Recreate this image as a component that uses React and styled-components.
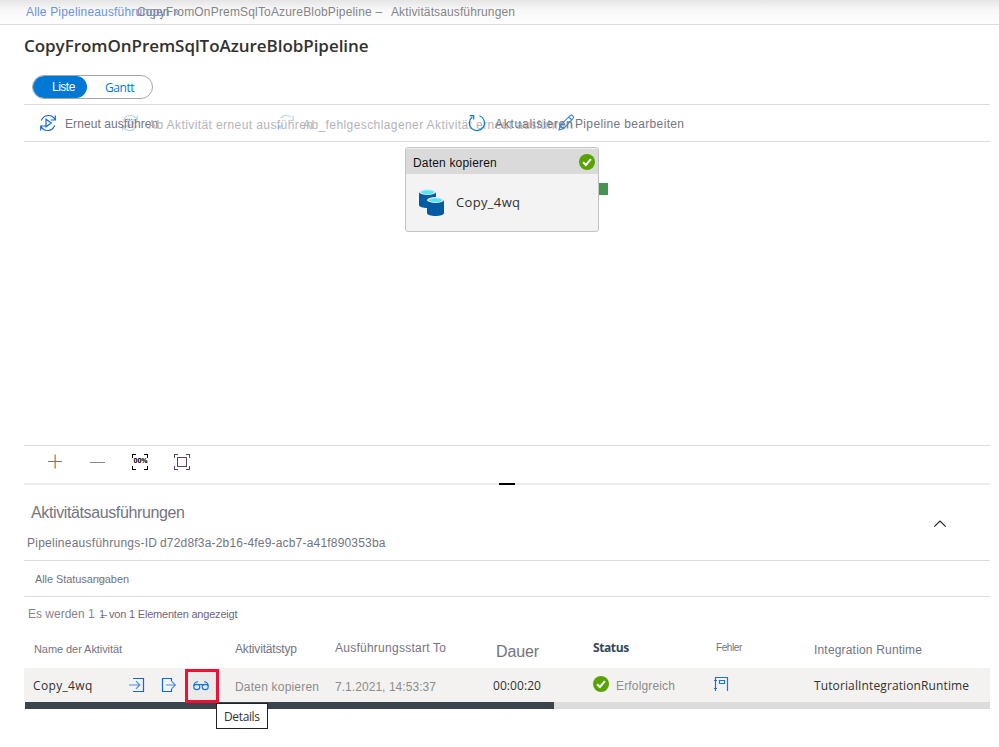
import React from 'react';
import styled, { createGlobalStyle, css } from 'styled-components';

const GlobalStyle = createGlobalStyle`
  * { box-sizing: border-box; }
  body { margin: 0; background: #fff; overflow: hidden; }
`;

const sans = '"Liberation Sans", Arial, sans-serif';
const ui = '"Open Sans", "Noto Sans", sans-serif';

const Page = styled.div`
  display: flex;
  flex-direction: column;
  width: 999px;
  height: 747px;
  background: #fff;
  font-family: ${sans};
`;

const Label = styled.span`
  display: block;
  height: 16px;
  line-height: 16px;
  margin-top: ${(p) => p.$drop || 0}px;
  white-space: pre;
  font-family: ${(p) => (p.$ui ? ui : sans)};
  font-size: ${(p) => p.$size || 12}px;
  font-weight: ${(p) => p.$weight || 400};
  letter-spacing: ${(p) => p.$track || 0}px;
  color: ${(p) => p.$color || '#74747f'};
`;

const Breadcrumbs = styled.nav`
  display: grid;
  grid-template-columns: 111px 254px 1fr;
  height: 25px;
  padding: 4px 0 0 26px;
  border-bottom: 1px solid #dcdcdc;
  background: linear-gradient(#e5e5e5, #f8f8f8 10px, #fdfdfd);
`;

const Title = styled.h1`
  margin: 0 0 0 24px;
  height: 50px;
  padding-top: 9px;
  font: 600 17px/24px ${ui};
  letter-spacing: -0.05px;
  color: #323130;
`;

const ViewSwitch = styled.div`
  display: grid;
  grid-template-columns: 54px 1fr;
  width: 121px;
  height: 24px;
  margin-left: 32px;
  border: 1px solid #a6a6a6;
  border-radius: 12px;
  overflow: hidden;
`;

const ViewOption = styled.div`
  padding: ${(p) => (p.$active ? '3px 0 0 19px' : '4px 0 0 18px')};
  border-radius: 12px;
  background: ${(p) => (p.$active ? '#0078d4' : 'transparent')};
`;

const Toolbar = styled.div`
  display: grid;
  grid-template-columns: 82px 156px 191px 90px 1fr;
  height: 38px;
  margin: 5px 9px 0 24px;
  padding: 9px 0 0 15px;
  border-top: 1px solid #dcdcdc;
  border-bottom: 1px solid #dcdcdc;
`;

const Command = styled.div`
  display: grid;
  grid-template-columns: ${(p) => p.$icon}px 1fr;
  height: 20px;
  min-width: 0;

  svg { opacity: ${(p) => (p.$disabled ? 0.3 : 1)}; }
`;

const Canvas = styled.div`
  display: flex;
  height: 303px;
  padding: 5px 0 0 405px;
`;

const Activity = styled.div`
  width: 194px;
  height: 85px;
  border: 1px solid #c3c3c3;
  border-radius: 3px;
  background: #f3f3f3;
  overflow: hidden;
`;

const ActivityHeader = styled.div`
  display: flex;
  justify-content: space-between;
  height: 26px;
  padding: 5px 3px 0 7px;
  border-top: 1px solid #f0f0f0;
  background: #dadada;
`;

const ActivityBody = styled.div`
  display: grid;
  grid-template-columns: 38px 1fr;
  padding: 15px 0 0 12px;
`;

const Port = styled.div`
  width: 9px;
  height: 12px;
  margin-top: 36px;
  background: #479352;
`;

const ZoomBar = styled.div`
  display: grid;
  grid-template-columns: 42px 42px 42px 42px;
  height: 38px;
  margin: 0 9px 0 24px;
  padding: 6px 0 0 21px;
  border-top: 1px solid #dcdcdc;
`;

const Splitter = styled.div`
  display: flex;
  justify-content: center;
  height: 2px;
  margin: 0 9px 0 24px;
  background: #ececec;

  &::after { content: ''; width: 16px; background: #000; }
`;

const Section = styled.header`
  display: flex;
  justify-content: space-between;
  height: 76px;
  margin: 0 9px 0 24px;
  padding: 20px 43px 0 3px;
  border-bottom: 1px solid #dcdcdc;
`;

const SectionText = styled.div`
  display: flex;
  flex-direction: column;
  gap: 14px;
`;

const Indent = styled.div`
  padding-left: ${(p) => p.$by}px;
`;

const RunId = styled.div`
  display: grid;
  grid-template-columns: 133px 1fr;
`;

const Chevron = styled.svg`
  width: 14px;
  height: 8px;
  margin-top: 15px;
`;

const FilterBar = styled.div`
  display: grid;
  grid-template-columns: 63px 1fr;
  height: 36px;
  margin: 0 9px 0 24px;
  padding: 10px 0 0 11px;
  border-bottom: 1px solid #dcdcdc;
`;

const Count = styled.div`
  display: grid;
  grid-template-columns: 71px 10px 1fr;
  height: 43px;
  padding: 9px 0 0 28px;
`;

const columns = css`
  display: grid;
  grid-template-columns: 201px 100px 160px 98px 123px 98px 1fr;
  margin: 0 9px 0 24px;
  padding-left: 10px;
`;

const HeadRow = styled.div`
  ${columns}
  height: 28px;
`;

const DataRow = styled.div`
  ${columns}
  height: 34px;
  background: #f3f2f1;
`;

const NameCell = styled.div`
  display: grid;
  grid-template-columns: 96px 32px 24px 34px;
  margin-left: -1px;
`;

const IconSlot = styled.div`
  padding-top: ${(p) => p.$top || 9}px;
  height: 26px;
`;

const DetailsButton = styled.div`
  position: relative;
  width: 34px;
  height: 34px;
  margin-top: 1px;
  padding: 9px 0 0 5px;
  border: 3px solid #ee1133;
  background: #eaeaea;
`;

const Tooltip = styled.div`
  position: absolute;
  z-index: 1;
  left: 28px;
  top: 31px;
  width: 52px;
  height: 26px;
  padding: 5px 0 0 7px;
  border: 1px solid #222;
  background: #fff;
`;

const Shift = styled.div`
  margin-left: ${(p) => p.$x}px;
`;

const StatusCell = styled.div`
  display: grid;
  grid-template-columns: 23px 1fr;
`;

const ScrollTrack = styled.div`
  height: 7px;
  margin: 0 9px 0 25px;
  background: #dcdcdc;
`;

const ScrollThumb = styled.div`
  width: 529px;
  height: 7px;
  background: #3b444d;
`;

const Glyph = styled.svg`
  display: block;
  overflow: visible;
  fill: none;
  stroke: ${(p) => p.$stroke || '#1267d8'};
  stroke-width: ${(p) => p.$weight || 1.2};
`;

function RerunIcon() {
  return (
    <Glyph width="18" height="18" viewBox="0 0 18 18">
      <path d="M2.3 6.6C5 .2 12.8-.2 16 5.5M16.3 1.5V6h-4.6M15.7 11.4C13 17.8 5.2 18.2 2 12.5M1.7 16.5V12h4.6M7 5.2v7.6L12.3 9z" />
    </Glyph>
  );
}

function RefreshIcon() {
  return (
    <Glyph width="18" height="18" viewBox="0 0 18 18" $stroke="#0078d4">
      <path d="M11.5 1.8A7.6 7.6 0 1 1 4.3 2.9M1.7 1.6h4v4" />
    </Glyph>
  );
}

function RerunFailedIcon() {
  return (
    <Glyph width="18" height="18" viewBox="0 0 18 18">
      <path d="M3.5 4C6.5.9 11 .8 14 3M16.2 2v4.5h-3M1.5 16v-4h4M2.2 12.2l1.6 2.4" />
    </Glyph>
  );
}

function EditIcon() {
  return (
    <Glyph width="17" height="17" viewBox="0 0 17 17" $stroke="#3b87dc" $weight="1.1">
      <path d="M1 16l1.2-4.6L12.2 1.6q1.3-1 2.6.3t.3 2.6L5.5 14.7zM10.8 3l3 3M2.2 11.4l3.3 3.3" />
    </Glyph>
  );
}

function SuccessIcon() {
  return (
    <Glyph width="16" height="16" viewBox="0 0 16 16" $stroke="none">
      <circle cx="8" cy="8" r="8" fill="#57a300" />
      <path d="M4.1 8.2l2.8 2.8 5-5.8" stroke="#fff" strokeWidth="2" />
    </Glyph>
  );
}

function Cylinder({ x, y }) {
  return (
    <g transform={`translate(${x} ${y})`}>
      <path d="M0 3v13c0 4 17 4 17 0V3z" fill="#005ba1" />
      <ellipse cx="8.5" cy="3" rx="8.5" ry="3" fill="#e8e8e8" />
      <ellipse cx="8.5" cy="3.2" rx="6.5" ry="2" fill="#50e6ff" />
    </g>
  );
}

function CopyDataIcon() {
  return (
    <Glyph width="28" height="28" viewBox="0 0 28 28" $stroke="none">
      <Cylinder x={1} y={0} />
      <Cylinder x={9} y={8} />
    </Glyph>
  );
}

function PlusIcon() {
  return (
    <Glyph width="20" height="20" viewBox="0 0 20 20" $stroke="#777" $weight="1">
      <path d="M9.5 2.5v14" stroke="#e9b98a" />
      <path d="M10.5 2.5v14" stroke="#60adf0" />
      <path d="M3 9.5h14" />
    </Glyph>
  );
}

function MinusIcon() {
  return (
    <Glyph width="20" height="20" viewBox="0 0 20 20" $stroke="#8a8a8a" $weight="1">
      <path d="M3 10.5h15" />
    </Glyph>
  );
}

const ZoomFrame = styled.div`
  display: grid;
  place-items: center;
  width: 16px;
  height: 16px;
  margin: 2px 0 0 3px;
  --edge: ${(p) => p.$color};
  background:
    linear-gradient(var(--edge), var(--edge)) 0 0 / 4px 1px,
    linear-gradient(var(--edge), var(--edge)) 0 0 / 1px 4px,
    linear-gradient(var(--edge), var(--edge)) 100% 0 / 4px 1px,
    linear-gradient(var(--edge), var(--edge)) 100% 0 / 1px 4px,
    linear-gradient(var(--edge), var(--edge)) 0 100% / 4px 1px,
    linear-gradient(var(--edge), var(--edge)) 0 100% / 1px 4px,
    linear-gradient(var(--edge), var(--edge)) 100% 100% / 4px 1px,
    linear-gradient(var(--edge), var(--edge)) 100% 100% / 1px 4px;
  background-repeat: no-repeat;
`;

const Percent = styled.span`
  font: 700 7px/14px ${ui};
  height: 16px;
  padding-left: 1px;
  letter-spacing: -0.1px;
  color: #000;
`;

const FitBox = styled.div`
  width: 10px;
  height: 10px;
  border: 1px solid #5a4660;
`;

function InputIcon() {
  return (
    <Glyph width="16" height="16" viewBox="0 0 16 16">
      <path d="M4 1.5h10.5v13H4" />
      <path d="M0 8h10.5M7 4.2L10.8 8 7 11.8" stroke="#4b8ee6" />
    </Glyph>
  );
}

function OutputIcon() {
  return (
    <Glyph width="16" height="16" viewBox="0 0 16 16">
      <path d="M10.5 4V1.5h-9v13h9V12" />
      <path d="M5 8h9M10.5 4.2L14.3 8l-3.8 3.8" stroke="#4b8ee6" />
    </Glyph>
  );
}

function GlassesIcon() {
  return (
    <Glyph width="16" height="10" viewBox="0 0 16 10" $stroke="#1976d2" $weight="1.1">
      <path d="M.6 5Q1.2.8 5 .8M15.4 5Q14.8.8 11 .8M.6 3.6h14.8" />
      <ellipse cx="3.8" cy="5.9" rx="3" ry="2.7" />
      <ellipse cx="12.2" cy="5.9" rx="3" ry="2.7" />
    </Glyph>
  );
}

function ErrorMessageIcon() {
  return (
    <Glyph width="16" height="16" viewBox="0 0 16 16" $stroke="#1976d2">
      <path d="M2.5 15V1.5h12V15M1 4.5h3M1 12.5h3M6.5 4.5h5v3h-5z" />
    </Glyph>
  );
}

export default function App() {
  return (
    <>
      <GlobalStyle />
      <Page>
        <Breadcrumbs>
          <Label $track={0.17} $color="#6b93dc">Alle Pipelineausführungen »</Label>
          <Label $track={0.17} $color="#858585">CopyFromOnPremSqlToAzureBlobPipeline –</Label>
          <Label $track={0.12} $color="#858585">Aktivitätsausführungen</Label>
        </Breadcrumbs>

        <Title>CopyFromOnPremSqlToAzureBlobPipeline</Title>

        <ViewSwitch>
          <ViewOption $active><Label $track={-0.5} $color="#fff">Liste</Label></ViewOption>
          <ViewOption><Label $ui $track={-0.45} $color="#0078d4">Gantt</Label></ViewOption>
        </ViewSwitch>

        <Toolbar>
          <Command $icon={26}><RerunIcon /><Label $drop={2} $track={0.08}>Erneut ausführen</Label></Command>
          <Command $icon={27} $disabled><RerunIcon /><Label $drop={3} $track={0.41} $color="#b4b4ba">Ab Aktivität erneut ausführen</Label></Command>
          <Command $icon={26} $disabled><RerunFailedIcon /><Label $drop={3} $track={0.41} $color="#b4b4ba">Ab_fehlgeschlagener Aktivität erneut ausführen</Label></Command>
          <Command $icon={27}><RefreshIcon /><Label $drop={2} $track={0.75}>Aktualisieren</Label></Command>
          <Command $icon={17}><EditIcon /><Label $drop={2} $track={0.35}>Pipeline bearbeiten</Label></Command>
        </Toolbar>

        <Canvas>
          <Activity>
            <ActivityHeader>
              <Label $drop={1} $track={0.18} $color="#111">Daten kopieren</Label>
              <SuccessIcon />
            </ActivityHeader>
            <ActivityBody>
              <CopyDataIcon />
              <Label $ui $size={13} $drop={5} $track={0.34} $color="#323130">Copy_4wq</Label>
            </ActivityBody>
          </Activity>
          <Port />
        </Canvas>

        <ZoomBar>
          <PlusIcon />
          <MinusIcon />
          <ZoomFrame $color="#000"><Percent>00%</Percent></ZoomFrame>
          <ZoomFrame $color="#5a4660"><FitBox /></ZoomFrame>
        </ZoomBar>
        <Splitter />

        <Section>
          <SectionText>
            <Indent $by={4}><Label $size={16} $track={-0.38}>Aktivitätsausführungen</Label></Indent>
            <RunId>
              <Label $track={0.25}>Pipelineausführungs-ID</Label>
              <Label $track={0.19}>d72d8f3a-2b16-4fe9-acb7-a41f890353ba</Label>
            </RunId>
          </SectionText>
          <Chevron viewBox="0 0 14 8"><path d="M1.3 6.7L7 1l5.7 5.7" fill="none" stroke="#222" strokeWidth="1.2" /></Chevron>
        </Section>

        <FilterBar>
          <Label $size={11} $track={-0.08}>Alle Statusangaben</Label>
          <Glyph width="10" height="6" viewBox="0 0 10 6" $stroke="#c6a468" $weight="1">
            <path d="M0 6l4.5 4L9 6" />
          </Glyph>
        </FilterBar>

        <Count>
          <Label $color="#85858e">Es werden 1</Label>
          <Label $size={11} $track={-4}>1–</Label>
          <Label $size={11} $track={-0.2} $color="#706580">von 1 Elementen angezeigt</Label>
        </Count>

        <HeadRow>
          <Label $size={11} $drop={1} $track={-0.07}>Name der Aktivität</Label>
          <Label $drop={1} $track={-0.17}>Aktivitätstyp</Label>
          <Label $track={0.25}>Ausführungsstart To</Label>
          <Shift $x={1}><Label $size={16} $drop={4} $track={-0.14}>Dauer</Label></Shift>
          <Label $ui $weight={700} $track={-0.4} $color="#34475a">Status</Label>
          <Label $size={10} $track={-0.4}>Fehler</Label>
          <Label $drop={2} $track={0.18}>Integration Runtime</Label>
        </HeadRow>

        <DataRow>
          <NameCell>
            <Label $ui $drop={10} $track={0.34} $color="#323130">Copy_4wq</Label>
            <IconSlot><InputIcon /></IconSlot>
            <IconSlot><OutputIcon /></IconSlot>
            <DetailsButton>
              <GlassesIcon />
              <Tooltip><Label $ui $track={-0.36} $color="#323130">Details</Label></Tooltip>
            </DetailsButton>
          </NameCell>
          <Label $drop={11} $track={0.2} $color="#8c8c8c">Daten kopieren</Label>
          <Label $drop={11} $track={0.05} $color="#8c8c8c">7.1.2021, 14:53:37</Label>
          <Shift $x={-2}><Label $ui $drop={10} $track={0.07} $color="#323130">00:00:20</Label></Shift>
          <StatusCell>
            <IconSlot $top={8}><SuccessIcon /></IconSlot>
            <Label $drop={10} $track={0.16} $color="#8c8c8c">Erfolgreich</Label>
          </StatusCell>
          <Shift $x={-3}><IconSlot $top={8}><ErrorMessageIcon /></IconSlot></Shift>
          <Label $ui $drop={10} $track={0.12} $color="#323130">TutorialIntegrationRuntime</Label>
        </DataRow>

        <ScrollTrack><ScrollThumb /></ScrollTrack>
      </Page>
    </>
  );
}
